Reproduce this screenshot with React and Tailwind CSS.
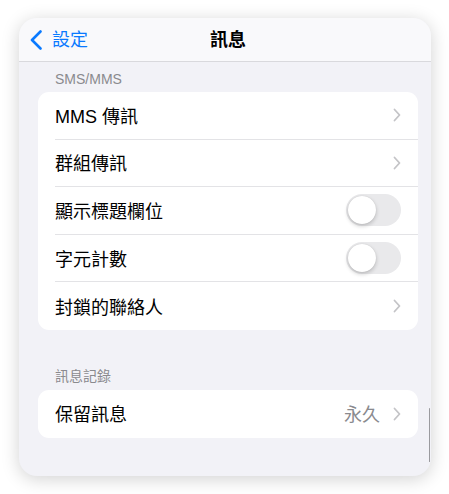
import React from "react";

function Chevron() {
  return (
    <svg width="8" height="14" viewBox="0 0 8 14" fill="none" className="shrink-0">
      <path d="M1.5 1.5 L6.5 7 L1.5 12.5" stroke="#c4c4c7" strokeWidth="1.8" strokeLinecap="round" strokeLinejoin="round" />
    </svg>
  );
}

function Toggle() {
  return (
    <div className="w-[55px] h-[32px] rounded-full bg-[#e9e9eb] p-[2px] flex items-center shrink-0">
      <div className="w-[28px] h-[28px] rounded-full bg-white shadow-[0_2px_4px_rgba(0,0,0,0.2),0_0_1px_rgba(0,0,0,0.15)]" />
    </div>
  );
}

function Row({ label, value, toggle, last }) {
  return (
    <div className="h-[47.6px] pl-[17px] flex">
      <div className={`flex-1 flex items-center pr-[17px] ${last ? "" : "border-b border-[#e3e3e6]"}`}>
        <span className="flex-1 text-[18px] leading-[26px] pt-[3px] text-black">{label}</span>
        {value && <span className="text-[18px] leading-[26px] pt-[3px] text-[#8a8a8e] mr-[13px]">{value}</span>}
        {toggle ? <Toggle /> : <Chevron />}
      </div>
    </div>
  );
}

export default function App() {
  const rows = [
    { label: "MMS 傳訊" },
    { label: "群組傳訊" },
    { label: "顯示標題欄位", toggle: true },
    { label: "字元計數", toggle: true },
    { label: "封鎖的聯絡人" },
  ];

  return (
    <div
      className="w-[449px] h-[494px] bg-white pt-[18px] pl-[19px]"
      style={{ fontFamily: '"Liberation Sans", "Noto Sans CJK TC", sans-serif' }}
    >
      <div className="relative w-[412px] h-[458px] rounded-[18px] overflow-hidden bg-[#f2f2f7] shadow-[0_3px_18px_rgba(0,0,0,0.18)]">
        <div className="h-[44px] bg-[#f9f9fb] border-b border-[#d9d9dd] flex items-center relative">
          <div className="flex items-center pl-[11px] gap-[9px] text-[#0a7aff]">
            <svg width="13" height="20" viewBox="0 0 13 20" fill="none">
              <path d="M10.5 1.5 L2 10 L10.5 18.5" stroke="#0a7aff" strokeWidth="2.6" strokeLinecap="round" strokeLinejoin="round" />
            </svg>
            <span className="text-[18px] leading-[26px] pt-[1px]">設定</span>
          </div>
          <div className="absolute inset-0 flex items-center justify-center pointer-events-none">
            <span className="text-[18px] leading-[26px] pt-[1px] font-semibold text-black pl-[6px]">訊息</span>
          </div>
        </div>

        <div className="pl-[19px] pr-[13px]">
          <div className="pl-[17px] pt-[8px] pb-[3px] h-[30px] flex items-center text-[14px] text-[#8a8a8e]">
            SMS/MMS
          </div>
          <div className="bg-white rounded-[11px] overflow-hidden">
            {rows.map((r, i) => (
              <Row key={r.label} {...r} last={i === rows.length - 1} />
            ))}
          </div>

          <div className="pl-[17px] mt-[34px] h-[26px] flex items-center text-[14px] text-[#8a8a8e]">
            訊息記錄
          </div>
          <div className="bg-white rounded-[11px] overflow-hidden">
            <Row label="保留訊息" value="永久" last />
          </div>
        </div>

        <div className="absolute right-[1px] top-[390px] w-[1.5px] h-[54px] rounded-full bg-[#9a9a9e]" />
      </div>
    </div>
  );
}
